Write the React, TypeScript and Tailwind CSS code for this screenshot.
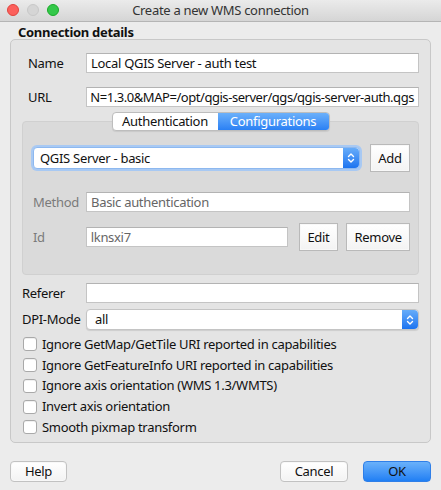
import type { ReactNode } from "react";

const inputBase =
  "h-[20px] border border-[#c4c4c4] border-t-[#b3b3b3] bg-white px-[4px] flex items-center whitespace-nowrap overflow-hidden";

function TitleBar() {
  return (
    <div className="relative flex h-[22px] items-center justify-center border-b border-[#b5b5b5] bg-gradient-to-b from-[#ebebeb] to-[#d5d5d5]">
      <div className="absolute left-[7px] top-[4px] flex gap-[8px]">
        <span className="h-[12px] w-[12px] rounded-full border border-[#e0443e] bg-[#fc605c]" />
        <span className="h-[12px] w-[12px] rounded-full border border-[#c8c8c8] bg-[#d5d5d5]" />
        <span className="h-[12px] w-[12px] rounded-full border border-[#1aab29] bg-[#34c84a]" />
      </div>
      <span className="text-[13px] text-[#333]">Create a new WMS connection</span>
    </div>
  );
}

function PushButton({ children, className }: { children: ReactNode; className?: string }) {
  return (
    <div
      className={`flex items-center justify-center border border-[#b9b9b9] bg-gradient-to-b from-white to-[#f3f3f3] shadow-[inset_0_0_0_1px_#f8f8f8] ${className ?? ""}`}
    >
      {children}
    </div>
  );
}

function Stepper() {
  return (
    <div className="flex h-full w-[16px] flex-col items-center justify-center rounded-r-[4px] bg-gradient-to-b from-[#66acf9] to-[#1a73f0]">
      <svg width="8" height="12" viewBox="0 0 8 12" fill="none" stroke="white" strokeWidth="1.4" strokeLinecap="round" strokeLinejoin="round">
        <path d="M1.5 4.5 L4 2 L6.5 4.5" />
        <path d="M1.5 7.5 L4 10 L6.5 7.5" />
      </svg>
    </div>
  );
}

function Check({ label }: { label: string }) {
  return (
    <div className="flex h-[20.75px] items-center">
      <span className="ml-[12px] h-[14px] w-[14px] rounded-[3px] border border-[#a9a9a9] bg-white shadow-[inset_0_1px_0_#f0f0f0]" />
      <span className="ml-[5px]">{label}</span>
    </div>
  );
}

export default function App() {
  return (
    <div className="h-[490px] w-[441px] overflow-hidden bg-[#ececec] font-['Noto_Sans',sans-serif] text-[13px] leading-none tracking-[-0.3px] text-[#111]">
      <TitleBar />
      <div className="px-[10px]">
        <div className="flex h-[17px] items-end pl-[8px] font-bold">Connection details</div>

        <div className="h-[404px] rounded-[5px] border border-[#c8c8c8] bg-[#e4e4e4] pt-[13px]">
          <div className="flex items-center pl-[17px] pr-[11px]">
            <span className="w-[58px]">Name</span>
            <div className={`${inputBase} flex-1`}>Local QGIS Server - auth test</div>
          </div>
          <div className="mt-[14px] flex items-center pl-[17px] pr-[11px]">
            <span className="w-[58px]">URL</span>
            <div className={`${inputBase} flex-1 justify-end tracking-[-0.45px]`}>
              N=1.3.0&amp;MAP=/opt/qgis-server/qgs/qgis-server-auth.qgs
            </div>
          </div>

          <div className="mt-[5px] flex flex-col px-[11px]">
            <div className="relative z-10 flex h-[19px] self-center overflow-hidden rounded-[4px] border border-[#bdbdbd] bg-white shadow-[0_1px_1px_rgba(0,0,0,0.08)]">
              <div className="flex w-[105px] items-center justify-center">Authentication</div>
              <div className="flex w-[111px] items-center justify-center bg-gradient-to-b from-[#6bb0fa] to-[#2a80f4] text-white">
                Configurations
              </div>
            </div>
            <div className="-mt-[10px] h-[154px] rounded-[4px] border border-[#d0d0d0] bg-[#dadada] pl-[10px] pr-[8px] pt-[22px]">
              <div className="flex items-center">
                <div className="flex h-[22px] w-[328px] items-center rounded-[4px] border border-[#8db8ef] bg-white pl-[6px] shadow-[0_0_0_2px_#a8c9f3]">
                  <span className="flex-1">QGIS Server - basic</span>
                  <Stepper />
                </div>
                <PushButton className="ml-[10px] h-[28px] w-[40px]">Add</PushButton>
              </div>
              <div className="mt-[20px] flex items-center text-[#7a7a7a]">
                <span className="w-[53px]">Method</span>
                <div className={`${inputBase} flex-1 text-[#666]`}>Basic authentication</div>
              </div>
              <div className="mt-[11px] flex items-center text-[#7a7a7a]">
                <span className="w-[53px]">Id</span>
                <div className={`${inputBase} w-[203px] text-[#666]`}>lknsxi7</div>
                <PushButton className="ml-[11px] h-[28px] w-[40px] text-[#111]">Edit</PushButton>
                <PushButton className="ml-[8px] h-[28px] w-[64px] text-[#111]">Remove</PushButton>
              </div>
            </div>
          </div>

          <div className="mt-[8px] flex items-center pl-[11px] pr-[11px]">
            <span className="w-[64px]">Referer</span>
            <div className={`${inputBase} flex-1`} />
          </div>
          <div className="mt-[6px] flex items-center pl-[11px] pr-[11px]">
            <span className="w-[64px]">DPI-Mode</span>
            <div className="flex h-[21px] flex-1 items-center rounded-[4px] border border-[#c4c4c4] bg-white pl-[8px] shadow-[0_1px_1px_rgba(0,0,0,0.1)]">
              <span className="flex-1">all</span>
              <Stepper />
            </div>
          </div>

          <div className="mt-[4px] flex flex-col">
            <Check label="Ignore GetMap/GetTile URI reported in capabilities" />
            <Check label="Ignore GetFeatureInfo URI reported in capabilities" />
            <Check label="Ignore axis orientation (WMS 1.3/WMTS)" />
            <Check label="Invert axis orientation" />
            <Check label="Smooth pixmap transform" />
          </div>
        </div>

        <div className="mt-[18px] flex items-center">
          <PushButton className="h-[21px] w-[57px] rounded-[4px] border-[#c2c2c2]">Help</PushButton>
          <div className="flex-1" />
          <PushButton className="h-[21px] w-[68px] rounded-[4px] border-[#c2c2c2]">Cancel</PushButton>
          <div className="ml-[15px] flex h-[21px] w-[68px] items-center justify-center rounded-[4px] border border-[#2f7fe8] bg-gradient-to-b from-[#69b1fa] to-[#1f7ff4] text-[#111]">
            OK
          </div>
        </div>
      </div>
    </div>
  );
}
